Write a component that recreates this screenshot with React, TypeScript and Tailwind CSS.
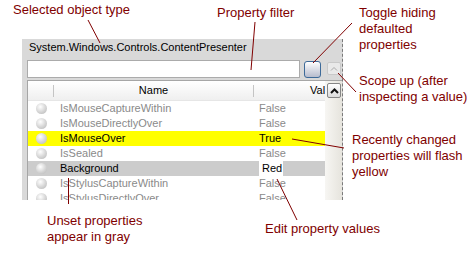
import clsx from "clsx";

const ANNOT = "#800000";

type Row = { name: string; value: string; state: "default" | "changed" | "set" };

const ROWS: Row[] = [
  { name: "IsMouseCaptureWithin", value: "False", state: "default" },
  { name: "IsMouseDirectlyOver", value: "False", state: "default" },
  { name: "IsMouseOver", value: "True", state: "changed" },
  { name: "IsSealed", value: "False", state: "default" },
  { name: "Background", value: "Red", state: "set" },
  { name: "IsStylusCaptureWithin", value: "False", state: "default" },
  { name: "IsStylusDirectlyOver", value: "False", state: "default" },
];

// leader lines from each callout to the thing it points at
const LINES: [number, number, number, number][] = [
  [88, 20, 100, 43],
  [255, 22, 251, 70],
  [352, 23, 313, 63],
  [338, 73, 356, 92],
  [292, 139, 344, 148],
  [68.5, 178, 68.5, 204],
  [277, 179, 297, 220],
];

function Callout({ className, lines }: { className: string; lines: string[] }) {
  return (
    <div className={clsx("absolute text-[13px] leading-[16px] whitespace-nowrap text-[#800000]", className)}>
      {lines.map((l) => (
        <div key={l}>{l}</div>
      ))}
    </div>
  );
}

function Bullet() {
  return <span className="block w-[11px] h-[11px] rounded-full bg-[radial-gradient(circle_at_40%_35%,#ffffff_0%,#d8d8d8_50%,#b4b4b4_100%)]" />;
}

function PropRow({ row }: { row: Row }) {
  return (
    <div
      className={clsx(
        "flex h-[15px] items-center shrink-0",
        row.state === "changed" && "bg-[#ffff00]",
        row.state === "set" && "bg-[#cccccc]",
      )}
    >
      <div className="w-[26px] flex justify-center">
        <Bullet />
      </div>
      <div className={clsx("w-[200px] pl-[6px]", row.state === "default" ? "text-[#8a8a8a]" : "text-black")}>{row.name}</div>
      <div className="flex-1 h-full flex items-center">
        {row.state === "set" ? (
          <span className="ml-[5px] h-full w-[24px] pl-[3px] bg-white flex items-center text-black">{row.value}</span>
        ) : (
          <span className={clsx("pl-[5px]", row.state === "default" ? "text-[#8a8a8a]" : "text-black")}>{row.value}</span>
        )}
      </div>
    </div>
  );
}

export default function App() {
  return (
    <div className="relative w-[469px] h-[254px] overflow-hidden bg-white pt-[39px] pl-[22px] font-['Liberation_Sans',Arial,sans-serif]">
      {/* Inspector panel */}
      <div className="w-[321px] h-[161px] bg-[#d9d9d9] border-r border-dashed border-[#7a7a7a] flex flex-col overflow-hidden text-[11px]">
        <div className="h-[17px] pl-[7px] flex items-center text-black">System.Windows.Controls.ContentPresenter</div>

        <div className="mt-[4px] pl-[5px] flex items-start shrink-0">
          <div className="w-[273px] h-[18px] bg-white border border-[#ababab]" />
          <button className="ml-[4px] mt-[1px] w-[17px] h-[17px] rounded-[3px] border-[1.5px] border-[#3d6a99] bg-linear-to-b from-white to-[#b7bccd]" />
          <button className="ml-[6px] mt-[2px] w-[14px] h-[13px] rounded-[2px] border border-[#c9c9c9] bg-[#e9e9e9] flex items-center justify-center">
            <svg width="8" height="5" viewBox="0 0 8 5">
              <polyline points="1,4.5 4,1.5 7,4.5" fill="none" stroke="#a9a9a9" strokeWidth="1" />
            </svg>
          </button>
        </div>

        {/* Property grid */}
        <div className="mt-[2px] ml-[5px] flex-1 flex border-t border-[#a6a6a6] min-h-0">
          <div className="flex-1 flex flex-col bg-white border-l border-[#a6a6a6] overflow-hidden">
            <div className="h-[20px] shrink-0 flex items-center bg-linear-to-b from-white to-[#efefef] border-b border-[#e6e6e6] text-black">
              <div className="w-[25px]" />
              <div className="w-px h-[12px] bg-[#c4c4c4]" />
              <div className="w-[199px] text-center">Name</div>
              <div className="w-px h-[12px] bg-[#c4c4c4]" />
              <div className="flex-1 pl-[56px] overflow-hidden whitespace-nowrap">Value</div>
            </div>
            {ROWS.map((r) => (
              <PropRow key={r.name} row={r} />
            ))}
          </div>
          <div className="w-[17px] bg-linear-to-r from-[#f7f6f3] to-[#e6e4dd]">
            <div className="ml-[2px] mt-[2px] w-[14px] h-[15px] rounded-[2px] border border-[#858585] bg-linear-to-b from-white to-[#dcdcdc] flex items-center justify-center">
              <svg width="9" height="6" viewBox="0 0 9 6">
                <polyline points="1,5 4.5,1.5 8,5" fill="none" stroke="#111" strokeWidth="2" />
              </svg>
            </div>
          </div>
        </div>
      </div>

      <Callout className="left-[13px] top-[2px]" lines={["Selected object type"]} />
      <Callout className="left-[217px] top-[5px]" lines={["Property filter"]} />
      <Callout className="left-[359px] top-[5px]" lines={["Toggle hiding", "defaulted", "properties"]} />
      <Callout className="left-[359px] top-[73px]" lines={["Scope up (after", "inspecting a value)"]} />
      <Callout className="left-[352px] top-[132px]" lines={["Recently changed", "properties will flash", "yellow"]} />
      <Callout className="left-[47px] top-[213px]" lines={["Unset properties", "appear in gray"]} />
      <Callout className="left-[265px] top-[221px]" lines={["Edit property values"]} />

      <svg className="absolute inset-0 pointer-events-none" width="469" height="254">
        {LINES.map(([x1, y1, x2, y2], i) => (
          <line key={i} x1={x1} y1={y1} x2={x2} y2={y2} stroke={ANNOT} strokeWidth="1" />
        ))}
      </svg>
    </div>
  );
}
